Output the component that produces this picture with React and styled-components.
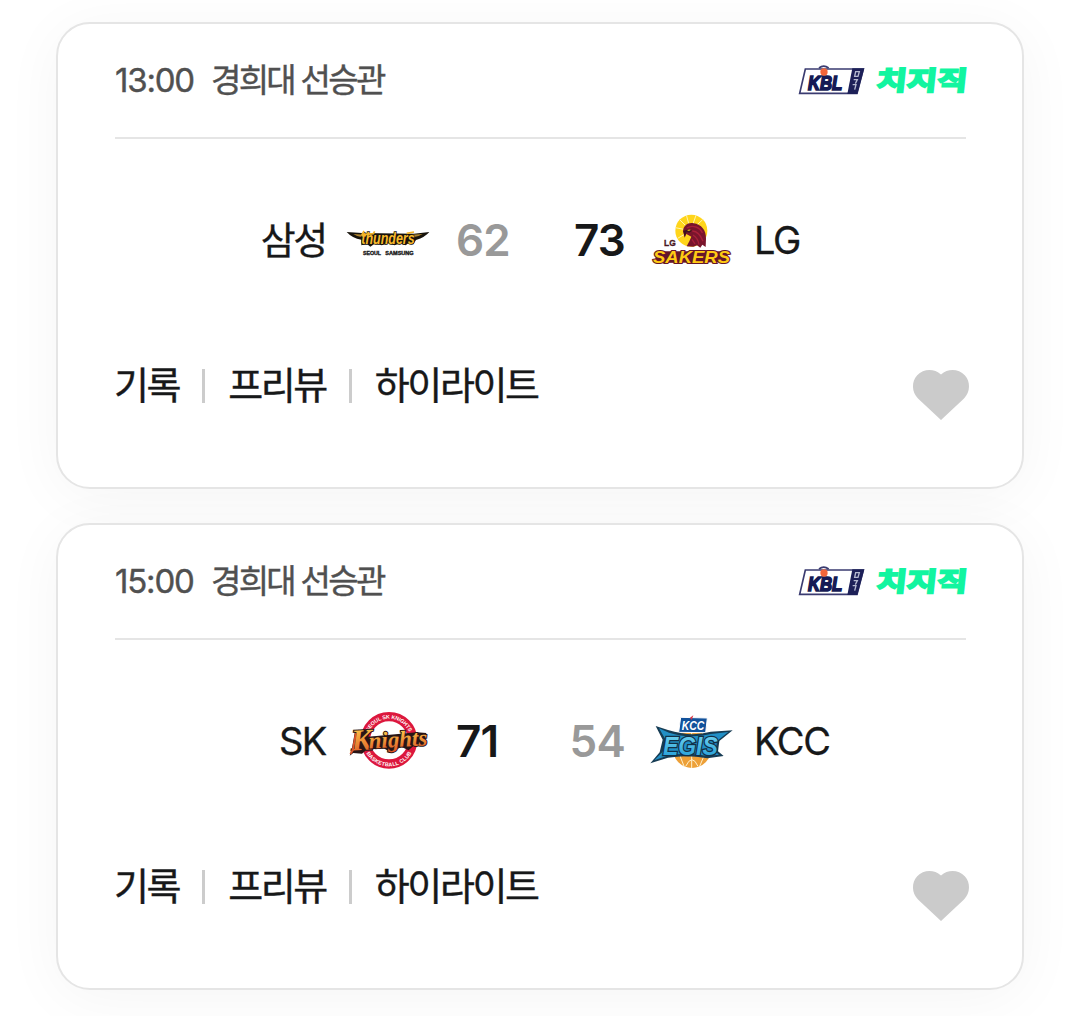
//libs
import styled, { createGlobalStyle } from "styled-components";

const games = [
    {
        time: '13:00',
        place: '경희대 선승관',
        home: { name: '삼성', score: 62, Logo: ThundersLogo },
        away: { name: 'LG', score: 73, Logo: SakersLogo }
    },
    {
        time: '15:00',
        place: '경희대 선승관',
        home: { name: 'SK', score: 71, Logo: KnightsLogo },
        away: { name: 'KCC', score: 54, Logo: EgisLogo }
    }
];

export default function App(){
    return(
        <>
            <GlobalStyle />
            <GamesList>
                {games.map((game, id) => <Game key={id} {...game} />)}
            </GamesList>
        </>
    );
}

function Game(props){
    const { time, place, home, away } = props;

    return(
        <Card>
            <CardHeader>
                <Time>{time}</Time>
                <Place>{place}</Place>
                <Channels>
                    <KblLogo />
                    <ChzzkLogo />
                </Channels>
            </CardHeader>
            <Match>
                <TeamName $home $hangul={home.name === '삼성'}>{home.name}</TeamName>
                <home.Logo />
                <Score $lost={home.score < away.score}>{home.score}</Score>
                <Score $away $lost={away.score < home.score}>{away.score}</Score>
                <away.Logo />
                <TeamName>{away.name}</TeamName>
            </Match>
            <CardFooter>
                <Links>
                    <GameLink>기록</GameLink>
                    <GameLink>프리뷰</GameLink>
                    <GameLink>하이라이트</GameLink>
                </Links>
                <LikeButton aria-label='관심 경기'>
                    <svg width="56" height="50" viewBox="0 0 56 50">
                        <path d="M28 50L5 28.500C-1.500 22-1.600 11.500 4.200 5.300C10.500-1.300 21-1.600 28 4.400C35-1.600 45.500-1.300 51.800 5.300C57.600 11.500 57.500 22 51 28.500Z" fill="#cbcbcb"/>
                    </svg>
                </LikeButton>
            </CardFooter>
        </Card>
    );
}

function KblLogo(){
    return(
        <svg width="67" height="30" viewBox="54 45 201 90">
            <path d="M76 57H250L231 130H59Z" fill="#fff" stroke="#3a3b70" strokeWidth="5"/>
            <path d="M217 55H253L232 132H202Z" fill="#1d2058"/>
            <path d="M117 54Q131 43 146 54" fill="none" stroke="#3a3b70" strokeWidth="5"/>
            <LogoText x="84" y="120" fontSize="58" textLength="103" fill="#151a55" stroke="#151a55" strokeWidth="5">KBL</LogoText>
            <circle cx="132" cy="66" r="11" fill="#f2653a"/>
            <path d="M227 65H238L234 79H224ZM221 89H232L226 101M218 104H228L224 119" fill="none" stroke="#b6bad1" strokeWidth="4"/>
        </svg>
    );
}

function ChzzkLogo(){
    return(
        <svg width="90" height="30" viewBox="288 45 270 90">
            <g transform="translate(284 120) skewX(-6)">
                <HangulLogoText x="3" y="-1" fontSize="79" textLength="272" fill="#12f5a0" stroke="#12f5a0" strokeWidth="6">치지직</HangulLogoText>
            </g>
        </svg>
    );
}

function ThundersLogo(){
    return(
        <svg width="84" height="60" viewBox="18 30 252 180">
            <path d="M20 96L66 99L222 101L268 96Q256 111 228 120L220 133L206 129L197 136L181 130L164 136L146 130L125 136L106 130L91 140L81 132L64 136L64 119Q37 115 20 96Z" fill="#17130c"/>
            <path d="M40 102L75 104L68 112Q52 111 40 102ZM248 102L215 104L220 112Q236 110 248 102Z" fill="#ae8430"/>
            <LogoText x="64" y="131" fontSize="48" textLength="160" fill="#f7ba2b" stroke="#17130c" strokeWidth="5">thunders</LogoText>
            <path d="M72 93L66 104L100 101L104 94M200 100L222 96" fill="none" stroke="#f2b429" strokeWidth="5"/>
            <SmallLogoText x="69" y="165" fontSize="15" textLength="54" fill="#171717" stroke="#171717">SEOUL</SmallLogoText>
            <SmallLogoText x="136" y="165" fontSize="15" textLength="85" fill="#171717" stroke="#171717">SAMSUNG</SmallLogoText>
        </svg>
    );
}

function SakersLogo(){
    return(
        <svg width="84" height="60" viewBox="30 30 252 180">
            <circle cx="157" cy="92" r="48" fill="#ffd51b"/>
            <path d="M155 92L109 83M155 92L121 58M155 92L142 45M155 92L171 46M155 92L191 59M155 92L116 115" stroke="#fff4ae" strokeWidth="3"/>
            <path d="M132 94C133 76 148 66 164 70C187 73 202 91 201 116L200 141L190 134L184 143L174 136L163 140L143 139L151 124L157 110L142 102L137 113Z" fill="#79152c"/>
            <path d="M144 84C160 73 184 82 190 99M160 93Q181 94 192 124M162 105Q177 114 180 134M159 118L168 132" fill="none" stroke="#a82039" strokeWidth="4"/>
            <path d="M133 93Q149 84 159 92L151 98L143 96L137 110Z" fill="#3d101e"/>
            <path d="M146 91L154 90" stroke="#ffd51b" strokeWidth="3"/>
            <SmallLogoText x="75" y="138" fontSize="25" textLength="35" fill="#491722" stroke="#491722">LG</SmallLogoText>
            <path d="M54 154H270L259 187L46 189Z" fill="#65162a"/>
            <LogoText x="42" y="188" fontSize="49" textLength="231" fill="#ffcb13" stroke="#65162a" strokeWidth="6">SAKERS</LogoText>
        </svg>
    );
}

function KnightsLogo(){
    return(
        <svg width="84" height="60" viewBox="18 30 252 180">
            <circle cx="147" cy="118" r="71" fill="#fff" stroke="#dc173d" strokeWidth="28"/>
            <path id="knightsTop" d="M82 118A65 65 0 0 1 212 118" fill="none"/>
            <path id="knightsBottom" d="M69 118A78 78 0 0 0 225 118" fill="none"/>
            <SmallLogoText fontSize="16" fill="#fff">
                <textPath href="#knightsTop" startOffset="26" textLength="152">SEOUL SK KNIGHTS</textPath>
            </SmallLogoText>
            <SmallLogoText fontSize="16" fill="#fff">
                <textPath href="#knightsBottom" startOffset="40" textLength="165">BASKETBALL CLUB</textPath>
            </SmallLogoText>
            <g transform="rotate(-3 147 118)">
                <path d="M47 84L91 80L86 104L232 98L260 102L254 133L220 138L204 151L184 140L149 153L131 142L79 142L64 154L38 150L27 158L34 139Z" fill="#281516"/>
                <SerifLogoText x="34" y="143" fontSize="90" textLength="62" fill="url(#flame)" stroke="#281516" strokeWidth="6">K</SerifLogoText>
                <SerifLogoText x="86" y="139" fontSize="68" textLength="176" fill="url(#flame)" stroke="#281516" strokeWidth="6">nights</SerifLogoText>
                <path d="M49 91L37 142L29 153" fill="none" stroke="#dc542a" strokeWidth="6"/>
            </g>
            <defs>
                <linearGradient id="flame" x2="0" y2="1">
                    <stop offset=".2" stopColor="#fbc046"/>
                    <stop offset="1" stopColor="#dc5225"/>
                </linearGradient>
            </defs>
        </svg>
    );
}

function EgisLogo(){
    return(
        <svg width="84" height="60" viewBox="30 30 252 180">
            <circle cx="159" cy="143" r="58" fill="#eda038"/>
            <path d="M109 165Q158 139 208 165M158 86V201M128 95Q109 143 136 198M190 95Q210 143 181 198M140 196Q159 156 177 196" fill="none" stroke="#fff0cc" strokeWidth="3"/>
            <path d="M125 49L205 51L200 95L119 94Z" fill="#12529b" stroke="#fff" strokeWidth="3"/>
            <LogoText x="128" y="86" fontSize="39" textLength="68" fill="#fff">KCC</LogoText>
            <path d="M153 50L163 43L158 57Z" fill="#d83342"/>
            <path d="M50 75L87 87Q157 109 215 92L281 88L241 120L237 151L254 165L205 172Q145 160 87 170L34 187L62 154L71 116Z" fill="#173c54"/>
            <path d="M60 82L90 95Q151 115 216 99L268 93L234 120L230 153L240 161L205 165Q144 153 89 163L46 178L71 152L80 116Z" fill="#218fc6"/>
            <LogoText x="72" y="161" fontSize="76" textLength="164" fill="url(#ice)" stroke="#123047" strokeWidth="8">EGIS</LogoText>
            <defs>
                <linearGradient id="ice" x2="0" y2="1">
                    <stop stopColor="#7ad8f2"/>
                    <stop offset="1" stopColor="#1e9ad6"/>
                </linearGradient>
            </defs>
        </svg>
    );
}

const GlobalStyle = createGlobalStyle`
    * {
        box-sizing: border-box;
    }

    body {
        margin: 0;
        background: #ffffff;
        font-family: 'Inter', 'Noto Sans CJK KR', sans-serif;
        overflow: hidden;
    }

    svg {
        display: block;
        flex-shrink: 0;
        overflow: visible;
    }
`

const GamesList = styled.main`
    display: flex;
    flex-direction: column;
    gap: 34px;
    padding: 22px 56px 26px;
`

const Card = styled.section`
    height: 467px;
    border: 2px solid #e5e5e5;
    border-radius: 34px;
    padding: 0 56px 0 57px;
    background: #ffffff;
    box-shadow: 0 8px 60px rgba(0, 0, 0, 0.045);
`

const CardHeader = styled.div`
    display: flex;
    align-items: center;
    height: 115px;
    border-bottom: 2px solid #e5e5e5;
    font-size: 33px;
    line-height: 48px;
    color: #505050;
    -webkit-text-stroke: 0.4px currentColor;
`

const Time = styled.p`
    width: 96px;
    margin: 0;
    padding-bottom: 1px;
    letter-spacing: -1.2px;
`

const Place = styled.p`
    margin: 0;
    padding-bottom: 1px;
    letter-spacing: -2.7px;
`

const Channels = styled.div`
    display: flex;
    gap: 11px;
    margin-left: auto;
    padding-bottom: 1px;
    -webkit-text-stroke: initial;
`

const Match = styled.div`
    display: grid;
    grid-template-columns: 212px 84px 81px 81px 84px 1fr;
    column-gap: 19px;
    align-items: center;
    height: 202px;
`

const TeamName = styled.p`
    margin: 0;
    padding: ${props => props.$home ? '0 1px 1px 0' : '0 0 1px 2px'};
    font-size: 38px;
    line-height: 54px;
    letter-spacing: ${props => props.$hangul ? '-2.3px' : '-1.4px'};
    color: #171819;
    text-align: ${props => props.$home ? 'right' : 'left'};
    -webkit-text-stroke: 0.3px currentColor;
`

const Score = styled.p`
    margin: 0;
    padding: ${props => props.$away ? '0 5px 1px 0' : '0 0 1px 7px'};
    font-size: 44px;
    font-weight: 600;
    line-height: 54px;
    letter-spacing: -0.8px;
    white-space: nowrap;
    color: ${props => props.$lost ? '#999999' : '#171819'};
    text-align: ${props => props.$away ? 'right' : 'left'};
`

const CardFooter = styled.div`
    display: flex;
    justify-content: space-between;
    height: 146px;
`

const Links = styled.div`
    display: flex;
    align-items: center;
    height: 88px;
    margin-left: -1px;
`

const GameLink = styled.a`
    display: flex;
    align-items: center;
    font-size: 38px;
    line-height: 54px;
    letter-spacing: -2.4px;
    color: #171819;
    -webkit-text-stroke: 0.4px currentColor;

    & + &::before {
        content: '';
        width: 3px;
        height: 34px;
        margin: 2px 23px 0 23px;
        background: #cccccc;
    }
`

const LikeButton = styled.button`
    display: flex;
    align-self: flex-start;
    margin: 29px -3px 0 0;
    padding: 0;
    border: none;
    background: none;
`

const LogoText = styled.text.attrs({ lengthAdjust: 'spacingAndGlyphs' })`
    font-family: 'Liberation Sans', sans-serif;
    font-style: italic;
    font-weight: 700;
    paint-order: stroke;
`

const SerifLogoText = styled(LogoText)`
    font-family: 'Liberation Serif', serif;
`

const SmallLogoText = styled.text.attrs({ lengthAdjust: 'spacingAndGlyphs' })`
    font-family: 'Liberation Sans', sans-serif;
    font-weight: 700;
`

const HangulLogoText = styled.text.attrs({ lengthAdjust: 'spacingAndGlyphs' })`
    font-family: 'Noto Sans CJK KR', sans-serif;
    font-weight: 700;
`
